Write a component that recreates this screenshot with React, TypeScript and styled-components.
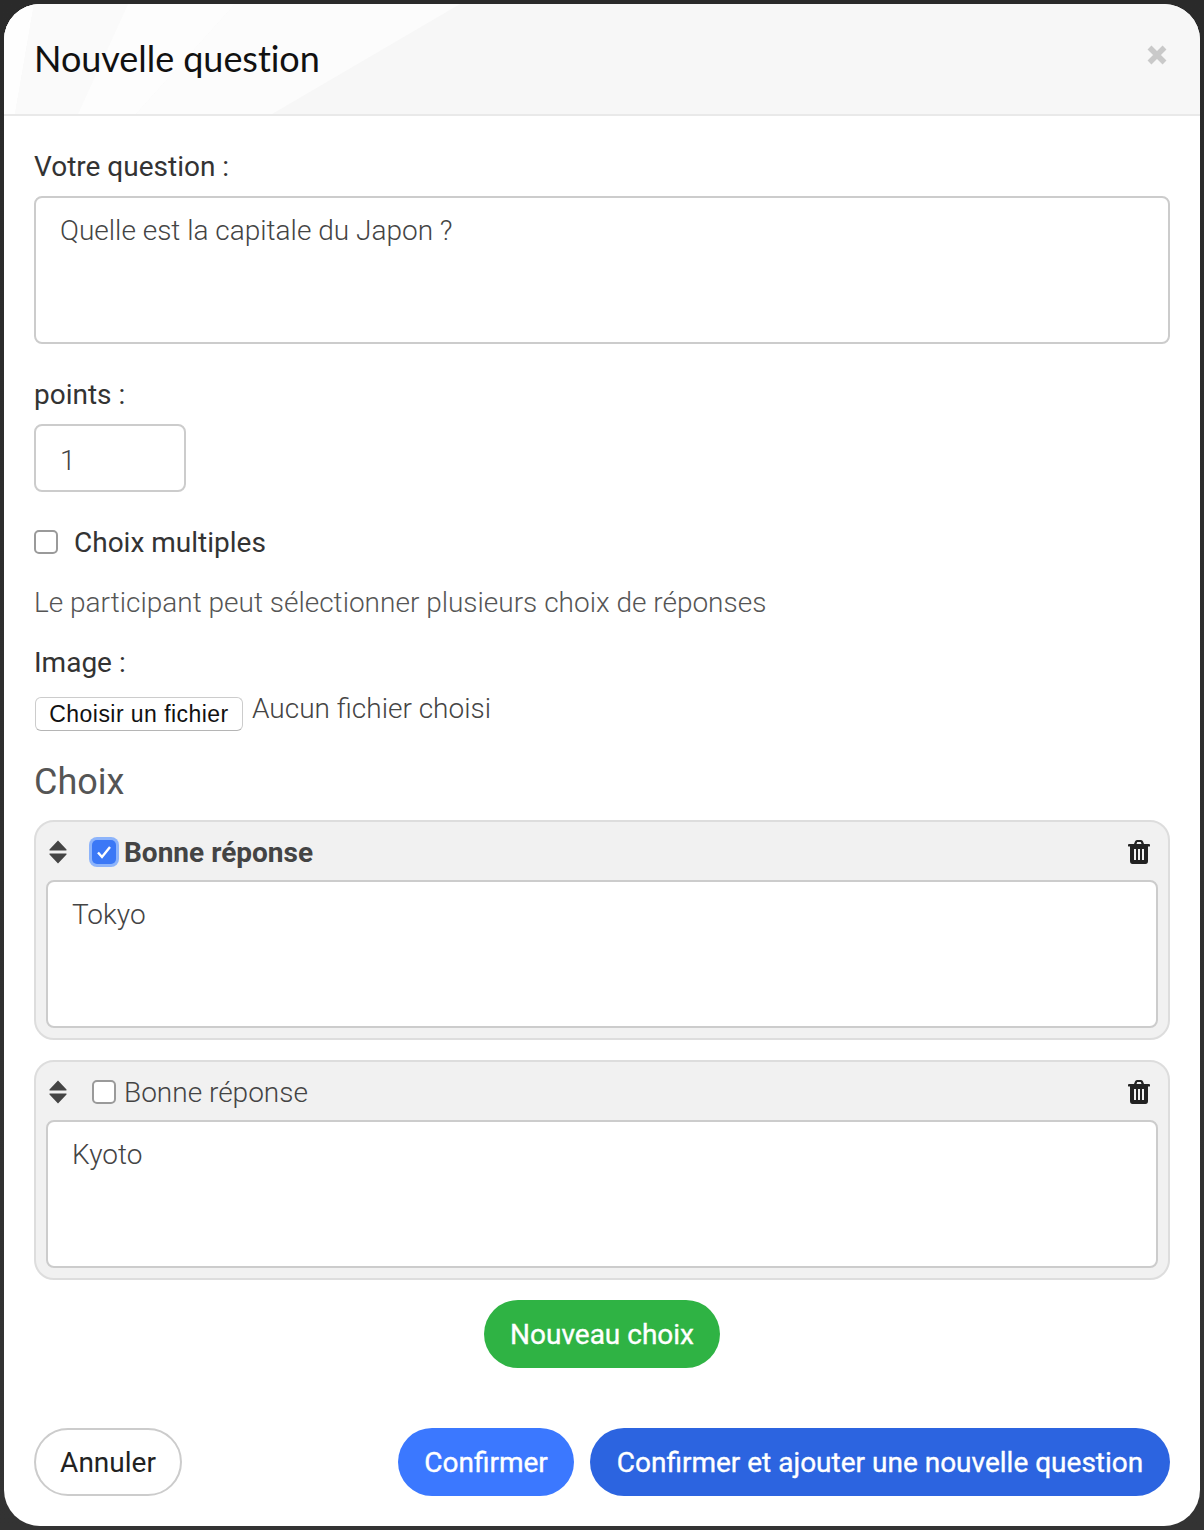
import React from "react";
import styled, { createGlobalStyle } from "styled-components";

const Global = createGlobalStyle`
  html, body { margin: 0; padding: 0; background: #333; }
  * { box-sizing: border-box; }
  body { font-family: Roboto, "Liberation Sans", sans-serif; }
`;

const Backdrop = styled.div`
  width: 1204px;
  height: 1530px;
  padding: 4px;
  background: linear-gradient(180deg, #2a2a2a 0%, #333 100%);
`;
const Modal = styled.div`
  width: 1196px;
  height: 1522px;
  background: #fff;
  border-radius: 36px;
  overflow: hidden;
  display: flex;
  flex-direction: column;
`;
const Header = styled.header`
  position: relative;
  height: 112px;
  flex: none;
  background: #f7f7f7;
  border-bottom: 2px solid #e9e9e9;
  display: flex;
  align-items: center;
  justify-content: space-between;
  padding: 0 32px 2px 30px;
`;
const HeaderArt = styled.svg`
  position: absolute;
  inset: 0;
  width: 100%;
  height: 100%;
`;
const Title = styled.h3`
  position: relative;
  margin: 0;
  font-family: Lato, sans-serif;
  font-weight: 400;
  font-size: 36px;
  line-height: 50px;
  letter-spacing: -0.05px;
  font-variant-ligatures: none;
  color: #111;
`;
const Close = styled.svg`
  position: relative;
  width: 22px;
  height: 22px;
  margin-top: -6px;
`;
const Body = styled.div`
  flex: 1;
  display: flex;
  flex-direction: column;
  padding: 31px 30px 30px 30px;
`;
const Label = styled.label<{ $gap?: number }>`
  font-size: 28px;
  line-height: 40px;
  color: #333;
  display: block;
  margin-top: ${(p) => p.$gap ?? 0}px;
  margin-bottom: 9px;
`;
const TextBox = styled.textarea`
  display: block;
  width: 100%;
  height: 148px;
  border: 2px solid #ccc;
  border-radius: 8px;
  padding: 13px 24px;
  font-family: Roboto, sans-serif;
  font-weight: 300;
  font-size: 28px;
  line-height: 40px;
  color: #444;
  background: #fff;
  resize: none;
  outline: none;
`;
const NumberBox = styled.input`
  display: block;
  width: 152px;
  height: 68px;
  border: 2px solid #ccc;
  border-radius: 8px;
  padding: 5px 24px 0;
  font-family: Roboto, sans-serif;
  font-weight: 300;
  font-size: 28px;
  color: #444;
  background: #fff;
  outline: none;
`;
const CheckRow = styled.div`
  display: flex;
  align-items: center;
  height: 40px;
  margin-top: 30px;
  gap: 16px;
  font-size: 28px;
  color: #333;
`;
const Box = styled.span<{ $checked?: boolean }>`
  flex: none;
  width: 24px;
  height: 24px;
  border-radius: 5px;
  display: flex;
  align-items: center;
  justify-content: center;
  background: ${(p) => (p.$checked ? "#3b78f6" : "#fff")};
  border: ${(p) => (p.$checked ? "none" : "2px solid #9a9a9a")};
  box-shadow: ${(p) => (p.$checked ? "0 0 0 3px #8db4fb" : "none")};
`;
const Help = styled.p`
  margin: 21px 0 0;
  font-weight: 300;
  font-size: 28px;
  line-height: 40px;
  color: #555;
`;
const FileRow = styled.div`
  display: flex;
  align-items: flex-start;
  height: 44px;
  margin-top: -3px;
`;
const FileButton = styled.button`
  width: 208px;
  height: 34px;
  margin: 8px 9px 0 1px;
  padding: 0;
  background: #fff;
  border: 1px solid #ccc;
  border-bottom-color: #b5b5b5;
  border-radius: 6px;
  font-family: "Liberation Sans", sans-serif;
  font-size: 23px;
  letter-spacing: 0.45px;
  color: #111;
`;
const FileName = styled.span`
  font-weight: 300;
  font-size: 28px;
  line-height: 30px;
  color: #444;
  margin-top: 5px;
`;
const Heading = styled.h4`
  margin: 24px 0 0;
  font-weight: 400;
  font-size: 36px;
  line-height: 50px;
  color: #555;
`;
const Choices = styled.div`
  display: flex;
  flex-direction: column;
  gap: 20px;
  margin-top: 13px;
`;
const Card = styled.div`
  height: 220px;
  background: #f1f1f1;
  border: 2px solid #ddd;
  border-radius: 20px;
  padding: 0 10px 10px;
`;
const CardBar = styled.div`
  height: 58px;
  display: flex;
  align-items: center;
  padding-top: 2px;
`;
const Sort = styled.svg`
  width: 18px;
  height: 24px;
  margin: 0 25px 0 3px;
  flex: none;
`;
const Answer = styled.span<{ $strong?: boolean }>`
  margin-left: 8px;
  font-size: 28px;
  font-weight: ${(p) => (p.$strong ? 700 : 300)};
  color: #444;
  flex: 1;
`;
const Trash = styled.svg`
  width: 22px;
  height: 24px;
  margin-right: 8px;
  flex: none;
`;
const Center = styled.div`
  display: flex;
  justify-content: center;
  margin-top: 20px;
`;
const Pill = styled.button<{ $bg: string; $w: number }>`
  height: 68px;
  width: ${(p) => p.$w}px;
  border: none;
  border-radius: 34px;
  background: ${(p) => p.$bg};
  color: #fff;
  font-family: Roboto, sans-serif;
  font-weight: 400;
  font-size: 28px;
  -webkit-text-stroke: 0.35px #fff;
  padding: 0;
`;
const Ghost = styled.button`
  height: 68px;
  width: 148px;
  border: 2px solid #ccc;
  border-radius: 34px;
  background: #fff;
  color: #222;
  font-family: Roboto, sans-serif;
  font-weight: 400;
  font-size: 28px;
  padding: 0;
`;
const Footer = styled.footer`
  display: flex;
  align-items: center;
  gap: 16px;
  margin-top: 60px;
`;
const Spacer = styled.div`
  flex: 1;
`;

const Tick = () => (
  <svg width="16" height="14" viewBox="0 0 16 14">
    <path d="M2 7.5 L6 12 L14 2" fill="none" stroke="#fff" strokeWidth="2.4" />
  </svg>
);
const SortIcon = () => (
  <Sort viewBox="0 0 18 24">
    <path d="M9 0.5 L17.5 9.5 Q18 10.5 17 10.5 H1 Q0 10.5 0.5 9.5 Z M1 13.5 H17 Q18 13.5 17.5 14.5 L9 23.5 L0.5 14.5 Q0 13.5 1 13.5 Z" fill="#444" />
  </Sort>
);
const TrashIcon = () => (
  <Trash viewBox="0 0 22 24">
    <path
      fillRule="evenodd"
      fill="#222"
      d="M7 1.5 Q7.5 0 9 0 H13 Q14.500 0 15 1.500 L16 4 H21 Q22 4 22 5 V6 Q22 6.500 21 6.500 H20 V21 Q20 24 17.500 24 H4.500 Q2 24 2 21 V6.500 H1 Q0 6.500 0 6 V5 Q0 4 1 4 H6 Z M8.500 4 H13.500 L12.800 2 H9.200 Z M6 9 V20 H8 V9 Z M10 9 V20 H12 V9 Z M14 9 V20 H16 V9 Z"
    />
  </Trash>
);

const Choice = ({ value, good }: { value: string; good?: boolean }) => (
  <Card>
    <CardBar>
      <SortIcon />
      <Box $checked={good}>{good && <Tick />}</Box>
      <Answer $strong={good}>Bonne réponse</Answer>
      <TrashIcon />
    </CardBar>
    <TextBox readOnly defaultValue={value} />
  </Card>
);

export default function App() {
  return (
    <Backdrop>
      <Global />
      <Modal>
        <Header>
          <HeaderArt viewBox="0 0 1196 110" preserveAspectRatio="none">
            <polygon points="0,0 30,0 11,110 0,110" fill="#fefefe" />
            <polygon points="30,0 124,0 74,110 11,110" fill="#fafafa" />
            <polygon points="124,0 231,0 132,110 74,110" fill="#fdfdfd" />
            <polygon points="231,0 456,0 268,110 132,110" fill="#fcfcfc" />
          </HeaderArt>
          <Title>Nouvelle question</Title>
          <Close viewBox="0 0 22 22">
            <path d="M3.500 3.500 L18.500 18.500 M18.500 3.500 L3.500 18.500" stroke="#c9c9c9" strokeWidth="5.500" />
          </Close>
        </Header>
        <Body>
          <Label>Votre question :</Label>
          <TextBox readOnly defaultValue="Quelle est la capitale du Japon ?" />
          <Label $gap={31}>points :</Label>
          <NumberBox readOnly defaultValue="1" />
          <CheckRow>
            <Box />
            <span>Choix multiples</span>
          </CheckRow>
          <Help>Le participant peut sélectionner plusieurs choix de réponses</Help>
          <Label $gap={20}>Image :</Label>
          <FileRow>
            <FileButton>Choisir un fichier</FileButton>
            <FileName>Aucun fichier choisi</FileName>
          </FileRow>
          <Heading>Choix</Heading>
          <Choices>
            <Choice value="Tokyo" good />
            <Choice value="Kyoto" />
          </Choices>
          <Center>
            <Pill $bg="#2fb344" $w={236}>Nouveau choix</Pill>
          </Center>
          <Footer>
            <Ghost>Annuler</Ghost>
            <Spacer />
            <Pill $bg="#3b78ff" $w={176}>Confirmer</Pill>
            <Pill $bg="#2c64e0" $w={580}>Confirmer et ajouter une nouvelle question</Pill>
          </Footer>
        </Body>
      </Modal>
    </Backdrop>
  );
}
